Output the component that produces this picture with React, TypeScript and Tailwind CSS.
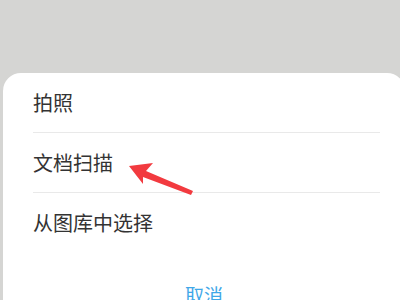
const items = ["拍照", "文档扫描", "从图库中选择"];

export default function App() {
  return (
    <div
      className="relative w-[400px] h-[300px] overflow-hidden bg-[#d5d5d3]"
      style={{ fontFamily: '"Noto Sans CJK SC", "Noto Sans", sans-serif' }}
    >
      <div className="pt-[73px] pl-[3px]">
        <div className="w-[402px] h-[260px] bg-white rounded-t-[18px]">
          {items.map((label, i) => (
            <div key={label} className="mx-[30px] mr-[25px]">
              <div className="h-[59px] flex items-center text-[20px] text-[#333333] leading-none">
                {label}
              </div>
              {i < items.length - 1 ? (
                <div className="h-px bg-[#e9e9e9]" />
              ) : null}
            </div>
          ))}
          <div className="mt-[33px] text-center text-[19px] text-[#3fa7e8] leading-none">
            取消
          </div>
        </div>
      </div>

      <svg
        className="absolute left-0 top-0"
        width="400"
        height="300"
        viewBox="0 0 400 300"
      >
        <polygon points="129,166 153,163 146,171 193,191 191,195 143,177 143,184" fill="#f23a3f" />
      </svg>
    </div>
  );
}
